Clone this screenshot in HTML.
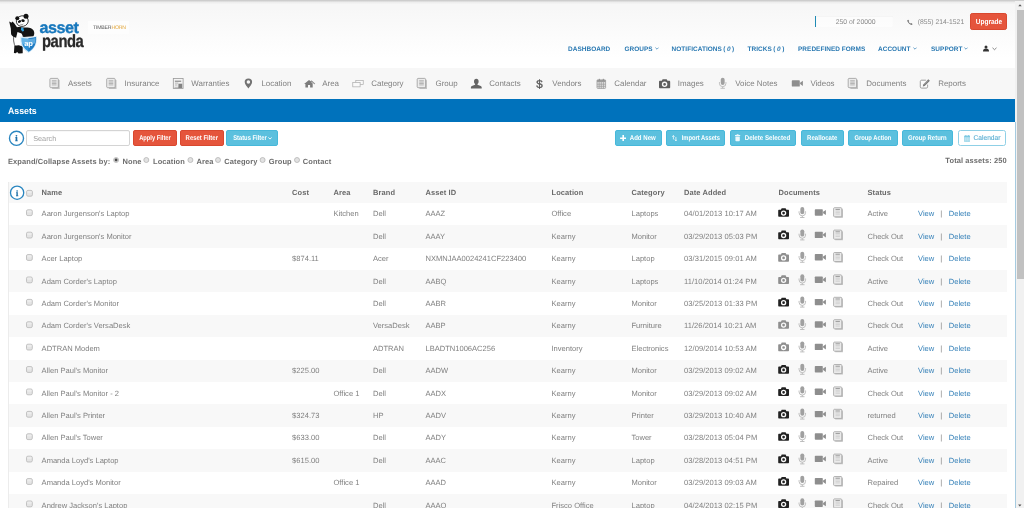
<!DOCTYPE html><html><head><meta charset="utf-8"><title>Assets</title><style>
html,body{margin:0;padding:0;background:#fff;overflow:hidden;}
#clip{position:absolute;left:0;top:0;width:1024px;height:508px;overflow:hidden;background:#fff;}
body{width:1024px;height:508px;overflow:hidden;font-family:"Liberation Sans",Arial,sans-serif;text-rendering:geometricPrecision;}
#page{position:relative;width:1024px;height:508px;overflow:visible;filter:blur(.35px);will-change:transform;}
#page>*{position:absolute;}
.t{white-space:nowrap;font-size:7.47px;color:#7d7d7d;}
.td{color:#808080;font-size:7.55px;}
.th{font-weight:bold;color:#6a6a6a;letter-spacing:.1px;font-size:7.47px;}
.lk{color:#3580b8;font-size:7.55px;}
.ic{display:block;overflow:visible;}
.stripe{left:8.5px;width:998px;background:#f8f8f8;}
.tbl{border-left:1px solid #ececec;border-top:1px solid #eaeaea;box-sizing:border-box;}
.cb{width:5px;height:5px;border:.8px solid #b8b8b8;border-radius:1.5px;background:linear-gradient(#ececec,#dadada);box-sizing:content-box;}
#hdr{left:-6px;top:0;width:1022px;height:68px;background:linear-gradient(#ececec 0,#eeeeee 2.5px,#f7f7f7 4.5px,#f7f7f7 8px,#ffffff 58px);}
#topline{left:-6px;top:-4px;width:1036px;height:6px;background:linear-gradient(#cdcdcd 0,#cdcdcd 4.9px,rgba(236,236,236,0) 6px);}
#nav{left:-6px;top:68px;width:1022px;height:31.5px;background:#f7f7f7;}
#bar{left:-6px;top:99.3px;width:1022px;height:22.5px;background:#0072bc;}
.nv{font-size:7.95px;color:#808080;}
.mn{font-size:6.45px;font-weight:bold;color:#2a79b2;letter-spacing:.05px;}
.btn{box-sizing:border-box;border-radius:1.9px;color:#fff;font-size:6.9px;font-weight:bold;white-space:nowrap;display:flex;align-items:center;justify-content:center;line-height:10px;padding-top:2px;}
.btn svg{display:block;flex:none;margin-top:-2px;}
.bl{display:block;transform-origin:50% 50%;}
.red{background:#e5553c;border:.5px solid #d9482f;}
.cy{background:#5bc0de;border:.5px solid #46b8da;}
.rb{font-size:7.47px;font-weight:bold;color:#6e6e6e;letter-spacing:.1px;}

</style></head><body>
<div id="clip"><div id="page">
<div id="hdr"></div><div id="topline"></div><div id="nav"></div><div id="bar"></div>
<svg class="ic" style="left:0;top:0" width="45" height="60" viewBox="0 0 45 60">
<path d="M15 30.500c-1.700 4-2 9.500-.6 14l2 4 5.800-1 1-12.500-2-6z" fill="#fff" stroke="#222" stroke-width=".7"/>
<path d="M9.200 21.500l2.300 1.300.9-1.200 1.600 1.400 3 4.300c1.500-.4 3.400-.4 5 .2l3.500.1c3-.6 6.600.3 8.100 2.800 1 1.800.9 4.200-.2 5.900l-9.900.7-2-3.500-4-1.600-1.400 5.800c-2.200-.2-4.200-1.500-5-3.400l-.3-5.800z" fill="#141414"/>
<ellipse cx="22.300" cy="21.100" rx="6" ry="5.300" fill="#fff" stroke="#1a1a1a" stroke-width=".8" transform="rotate(-12 22.300 21.100)"/>
<circle cx="17.300" cy="18.300" r="2" fill="#111"/><circle cx="26" cy="16.200" r="2.500" fill="#111"/>
<ellipse cx="19.500" cy="21.500" rx="1.700" ry="1.250" fill="#111" transform="rotate(-30 19.500 21.500)"/><ellipse cx="23" cy="20.600" rx="1.800" ry="1.350" fill="#111" transform="rotate(15 23 20.600)"/>
<path d="M20.400 24.300c.8.600 2.100.600 2.900-.2" stroke="#222" stroke-width=".5" fill="none"/>
<path d="M21.300 27.400l2 .3.700 3.400-1.800.5-1.300-2.100z" fill="#2fa3e0"/>
<path d="M14.400 45.800l4.400-.6 3.900 1.200v6.800l-4.100.3-1.500-1.500-1.300 1.300-1.900-.3z" fill="#141414"/>
<path d="M21 37.100c5 1.400 10.200 1.400 15.200-.3.600 7.200-2.300 12.400-7.800 15.400-5.400-3-8-8.200-7.400-15.100z" fill="#2f93d6" stroke="#d3e9f7" stroke-width="1.200"/>
<path d="M28.400 38.200c2.700 0 5.300-.4 7.600-1.100.6 7-2.100 11.900-7.600 14.900z" fill="#1f7cc4"/>
<path d="M21.700 38.100c4.500 1.100 9.400 1.100 13.800-.2.100 2.100-.1 3.900-.7 5.600-4 1.500-8.500 1.500-12.500.2-.5-1.700-.7-3.600-.6-5.600z" fill="#8fd0f5" opacity=".55"/>
<text x="28.500" y="46.200" font-family="Liberation Sans,Arial,sans-serif" font-weight="bold" font-size="7.600" fill="#fff" text-anchor="middle" letter-spacing="-.3">ap</text>
</svg>
<div class="t" style="left:39.6px;top:19px;height:18px;line-height:18px;font-size:16.2px;font-weight:bold;color:#1878bd;letter-spacing:-.5px;-webkit-text-stroke:.35px #1878bd">asset</div>
<div class="t" style="left:41.8px;top:30.5px;height:20px;line-height:20px;font-size:17.6px;font-weight:bold;color:#2a2a2a;letter-spacing:-.5px;transform:scaleX(.84);transform-origin:0 0;-webkit-text-stroke:.3px #2a2a2a">panda</div>
<div style="left:88px;top:21px;width:41px;height:13px;background:#fdfdfd"></div>
<div class="t" style="left:93px;top:23px;height:10px;line-height:10px;font-size:5.2px;color:#555;letter-spacing:-.2px">TIMBER<span style="color:#e2a63a">HORN</span></div>
<div style="left:814.9px;top:16.4px;width:78px;height:11.1px;background:rgba(255,255,255,.5);border-left:1.7px solid #1f8bb5;box-sizing:border-box;box-shadow:inset 0 .5px 1px rgba(0,0,0,.06)"></div>
<div class="t " style="left:835.7px;top:17px;height:12px;line-height:12px;font-size:6.85px;color:#8a8a8a">250 of 20000</div>
<svg class="ic" style="left:907px;top:19px" width="7" height="8"><svg x="0.000" y="0.400" width="5.8" height="5.8" viewBox="0 0 6 6" overflow="visible"><path d="M1.300.300l1 1.300-.6.900c.4.800 1 1.400 1.800 1.800l.9-.6 1.300 1-.5 1C3.500 6 0 2.500.300.800z" fill="#777"/></svg></svg>
<div class="t " style="left:917.7px;top:17px;height:12px;line-height:12px;font-size:6.8px;color:#8a8a8a">(855) 214-1521</div>
<div class="t mn" style="left:568px;top:44px;height:12px;line-height:12px;">DASHBOARD</div>
<div class="t mn" style="left:624.5px;top:44px;height:12px;line-height:12px;">GROUPS<svg width="4" height="3" viewBox="0 0 4 3" style="display:inline-block;vertical-align:middle;margin-left:2px;margin-top:-1px"><path d="M.4.600L2 2.200 3.600.600" fill="none" stroke="#2a79b2" stroke-width=".7"/></svg></div>
<div class="t mn" style="left:671.6px;top:44px;height:12px;line-height:12px;word-spacing:-.4px;">NOTIFICATIONS ( <i>0</i> )</div>
<div class="t mn" style="left:747.5px;top:44px;height:12px;line-height:12px;word-spacing:-.3px;">TRICKS ( <i>0</i> )</div>
<div class="t mn" style="left:798px;top:44px;height:12px;line-height:12px;">PREDEFINED FORMS</div>
<div class="t mn" style="left:878px;top:44px;height:12px;line-height:12px;">ACCOUNT<svg width="4" height="3" viewBox="0 0 4 3" style="display:inline-block;vertical-align:middle;margin-left:2px;margin-top:-1px"><path d="M.4.600L2 2.200 3.600.600" fill="none" stroke="#2a79b2" stroke-width=".7"/></svg></div>
<div class="t mn" style="left:931px;top:44px;height:12px;line-height:12px;">SUPPORT<svg width="4" height="3" viewBox="0 0 4 3" style="display:inline-block;vertical-align:middle;margin-left:2px;margin-top:-1px"><path d="M.4.600L2 2.200 3.600.600" fill="none" stroke="#2a79b2" stroke-width=".7"/></svg></div>
<svg class="ic" style="left:983px;top:45px" width="7" height="8"><svg x="0.000" y="0.500" width="6" height="6" viewBox="0 0 6 6" overflow="visible"><circle cx="3" cy="1.600" r="1.500" fill="#333"/><path d="M0 6c0-2 1-2.900 3-2.900S6 4 6 6z" fill="#333"/></svg></svg>
<svg class="ic" style="left:992px;top:47px" width="6" height="5"><svg x="0.000" y="0.300" width="5" height="3" viewBox="0 0 5 3" overflow="visible"><path d="M.5.500L2.500 2.400 4.500.500" fill="none" stroke="#555" stroke-width=".7"/></svg></svg>
<svg class="ic" style="left:49px;top:78px" width="12" height="12"><svg x="0.500" y="0.000" width="10.5" height="11" viewBox="0 0 10.5 11" overflow="visible"><path d="M2.600 1.800h6.900c.4 0 .7.300.7.700v8.400H2.600z" fill="#c4c4c4"/><path d="M1.200.4h6.800c.4 0 .8.400.8.800v8.500H1.200c-.4 0-.8-.4-.8-.8V1.200c0-.4.400-.8.800-.8z" fill="#ececec" stroke="#9c9c9c" stroke-width=".8"/><path d="M2.400 2.700h4.600M2.400 4.100h4.600M2.400 5.500h4.600M2.400 6.900h4.600" stroke="#9e9e9e" stroke-width=".7"/></svg></svg>
<div class="t nv" style="left:68px;top:78px;height:12px;line-height:12px;">Assets</div>
<svg class="ic" style="left:106px;top:78px" width="12" height="12"><svg x="0.300" y="0.000" width="10.5" height="11" viewBox="0 0 10.5 11" overflow="visible"><path d="M2.600 1.800h6.900c.4 0 .7.300.7.700v8.400H2.600z" fill="#c4c4c4"/><path d="M1.200.4h6.800c.4 0 .8.400.8.800v8.500H1.200c-.4 0-.8-.4-.8-.8V1.200c0-.4.400-.8.800-.8z" fill="#ececec" stroke="#9c9c9c" stroke-width=".8"/><path d="M2.400 2.700h4.600M2.400 4.100h4.600M2.400 5.500h4.600M2.400 6.900h4.600" stroke="#9e9e9e" stroke-width=".7"/></svg></svg>
<div class="t nv" style="left:124.6px;top:78px;height:12px;line-height:12px;">Insurance</div>
<svg class="ic" style="left:172px;top:78px" width="13" height="12"><svg x="0.900" y="0.000" width="10.6" height="10.8" viewBox="0 0 10.600 10.800" overflow="visible"><rect x=".4" y=".4" width="9.800" height="10" fill="#f4f4f4" stroke="#989898" stroke-width=".8"/><path d="M2 3.200h6.300" stroke="#6a6a6a" stroke-width=".9"/><path d="M2 5.100h3.400M2 7h2.600M1.500 9.300h7.500" stroke="#9a9a9a" stroke-width=".7"/><rect x="5.500" y="5.700" width="3.800" height="4.300" fill="#838383"/></svg></svg>
<div class="t nv" style="left:191.3px;top:78px;height:12px;line-height:12px;">Warranties</div>
<svg class="ic" style="left:244px;top:78px" width="10" height="12"><svg x="0.400" y="0.200" width="8" height="10.6" viewBox="0 0 8.600 12" preserveAspectRatio="none" overflow="visible"><path d="M4.300.3a4 4 0 0 0-4 4c0 2.600 2.700 5.300 4 7.400 1.300-2.100 4-4.800 4-7.400a4 4 0 0 0-4-4zm0 2.100a1.900 1.900 0 1 1 0 3.800 1.900 1.900 0 0 1 0-3.800z" fill="#727272" fill-rule="evenodd"/></svg></svg>
<div class="t nv" style="left:261.4px;top:78px;height:12px;line-height:12px;">Location</div>
<svg class="ic" style="left:304px;top:79px" width="13" height="10"><svg x="0.100" y="0.700" width="11.2" height="8" viewBox="0 0 11.200 8" overflow="visible"><path d="M0 4.400L4.900.2l1.700 1.400.9-.9 3.600 3.300-.6.600-3-2.600-.5.400 1.600 1.500v4H6V5.300H3.900v2.600H1.300V4.400z" fill="#7c7c7c"/><path d="M7.500.7l3.600 3.300-.6.600-3.400-3.100z" fill="#a0a0a0"/></svg></svg>
<div class="t nv" style="left:322.2px;top:78px;height:12px;line-height:12px;">Area</div>
<svg class="ic" style="left:352px;top:80px" width="13" height="9"><svg x="0.400" y="0.000" width="11.3" height="7.3" viewBox="0 0 12 8" preserveAspectRatio="none" overflow="visible"><rect x="3.600" y=".4" width="7.900" height="4.600" fill="#f9f9f9" stroke="#aaa" stroke-width=".75"/><rect x=".4" y="2.600" width="7.800" height="4.900" fill="#f9f9f9" stroke="#aaa" stroke-width=".75"/></svg></svg>
<div class="t nv" style="left:371.3px;top:78px;height:12px;line-height:12px;">Category</div>
<svg class="ic" style="left:416px;top:78px" width="13" height="12"><svg x="0.800" y="0.000" width="10.5" height="11" viewBox="0 0 10.5 11" overflow="visible"><path d="M2.600 1.800h6.900c.4 0 .7.300.7.700v8.400H2.600z" fill="#c4c4c4"/><path d="M1.200.4h6.800c.4 0 .8.400.8.800v8.500H1.200c-.4 0-.8-.4-.8-.8V1.200c0-.4.400-.8.800-.8z" fill="#ececec" stroke="#9c9c9c" stroke-width=".8"/><path d="M2.400 2.700h4.600M2.400 4.100h4.600M2.400 5.500h4.600M2.400 6.900h4.600" stroke="#9e9e9e" stroke-width=".7"/></svg></svg>
<div class="t nv" style="left:435.5px;top:78px;height:12px;line-height:12px;">Group</div>
<svg class="ic" style="left:470px;top:78px" width="13" height="12"><svg x="0.800" y="0.600" width="11" height="10.2" viewBox="0 0 11.500 11" preserveAspectRatio="none" overflow="visible"><ellipse cx="5.750" cy="3" rx="2.400" ry="2.900" fill="#646464"/><path d="M4.500 5h2.500v1.600c1.600.6 4.200 1.200 4.400 2.600v1.500H.1V9.200c.2-1.400 2.800-2 4.400-2.600z" fill="#646464"/></svg></svg>
<div class="t nv" style="left:489.3px;top:78px;height:12px;line-height:12px;">Contacts</div>
<div class="t nv" style="left:536.3px;top:78px;height:14px;line-height:14px;font-size:11.6px;color:#555;-webkit-text-stroke:.3px #555;">$</div>
<div class="t nv" style="left:552.3px;top:78px;height:12px;line-height:12px;">Vendors</div>
<svg class="ic" style="left:596px;top:78px" width="12" height="12"><svg x="0.600" y="0.600" width="9.4" height="10.2" viewBox="0 0 9.400 10.200" overflow="visible"><rect x=".4" y="1.300" width="8.600" height="8.500" rx=".7" fill="#e2e2e2" stroke="#9c9c9c" stroke-width=".8"/><rect x=".4" y="1.300" width="8.600" height="2.200" fill="#9c9c9c"/><path d="M.4 5.600h8.600M.4 7.700h8.600M2.550 3.500v6.300M4.700 3.500v6.300M6.850 3.500v6.300" stroke="#9c9c9c" stroke-width=".75"/><path d="M2.700.2v1.900M6.700.2v1.900" stroke="#8c8c8c" stroke-width="1"/></svg></svg>
<div class="t nv" style="left:614.3px;top:78px;height:12px;line-height:12px;">Calendar</div>
<svg class="ic" style="left:659px;top:79px" width="13" height="11"><svg x="0.000" y="0.200" width="11.4" height="9" viewBox="0 0 11 8.700" overflow="visible"><path d="M3.500 0h3.900l.8 1.600h1.600c.6 0 1 .4 1 1v5.100c0 .6-.4 1-1 1H1c-.6 0-1-.4-1-1V2.600c0-.6.4-1 1-1h1.700zM5.400 2.300a2.650 2.650 0 1 0 0 5.300 2.650 2.650 0 0 0 0-5.300zm0 1.300a1.350 1.350 0 1 1 0 2.700 1.350 1.350 0 0 1 0-2.700z" fill-rule="evenodd" fill="#5e5e5e"/></svg></svg>
<div class="t nv" style="left:677.8px;top:78px;height:12px;line-height:12px;">Images</div>
<svg class="ic" style="left:719px;top:77px" width="9" height="13"><svg x="0.000" y="0.800" width="7.4" height="11" viewBox="0 0 7.400 11" overflow="visible"><path d="M.450 4.300v1.300a3.250 3.250 0 0 0 6.500 0V4.300M3.700 8.900v1.500M1.500 10.500h4.400" fill="none" stroke="#b4b4b4" stroke-width=".85"/><rect x="1.750" y="0" width="3.900" height="7.200" rx="1.950" fill="#a0a0a0"/></svg></svg>
<div class="t nv" style="left:735.2px;top:78px;height:12px;line-height:12px;">Voice Notes</div>
<svg class="ic" style="left:791px;top:80px" width="13" height="8"><svg x="0.800" y="0.200" width="11.1" height="6.4" viewBox="0 0 11.100 6.400" overflow="visible"><rect x="0" y="0" width="8" height="6.400" rx=".7" fill="#8e8e8e"/><path d="M8.300 2.500l2.800-1.900v5.200L8.300 3.900z" fill="#8e8e8e"/></svg></svg>
<div class="t nv" style="left:810.4px;top:78px;height:12px;line-height:12px;">Videos</div>
<svg class="ic" style="left:847px;top:78px" width="13" height="12"><svg x="0.800" y="0.000" width="10.5" height="11" viewBox="0 0 10.5 11" overflow="visible"><path d="M2.600 1.800h6.900c.4 0 .7.300.7.700v8.400H2.600z" fill="#c4c4c4"/><path d="M1.200.4h6.800c.4 0 .8.400.8.800v8.500H1.200c-.4 0-.8-.4-.8-.8V1.200c0-.4.400-.8.800-.8z" fill="#ececec" stroke="#9c9c9c" stroke-width=".8"/><path d="M2.400 2.700h4.600M2.400 4.100h4.600M2.400 5.500h4.600M2.400 6.900h4.600" stroke="#9e9e9e" stroke-width=".7"/></svg></svg>
<div class="t nv" style="left:866.3px;top:78px;height:12px;line-height:12px;">Documents</div>
<svg class="ic" style="left:919px;top:79px" width="13" height="11"><svg x="0.900" y="0.000" width="10.4" height="9.5" viewBox="0 0 10.400 9.500" overflow="visible"><path d="M6 1.200H1.700C1 1.200.4 1.700.4 2.500v5.300c0 .8.500 1.300 1.300 1.300h4.700c.8 0 1.300-.5 1.300-1.300V5.600" fill="#fbfbfb" stroke="#888" stroke-width=".8"/><path d="M3.300 5.500L8.400.2l1.600 1.500-5.200 5.200-1.900.5z" fill="#7a7a7a"/><path d="M4 5.600l3.900-3.900" stroke="#d8d8d8" stroke-width=".45"/></svg></svg>
<div class="t nv" style="left:938.2px;top:78px;height:12px;line-height:12px;">Reports</div>
<div class="t " style="left:7.6px;top:104px;height:14px;line-height:14px;font-size:9.4px;font-weight:bold;color:#fff;transform:scaleX(.935);transform-origin:0 50%;">Assets</div>
<svg class="ic" style="left:8px;top:130px" width="18" height="18"><svg x="0.750" y="0.550" width="15.5" height="15.5" viewBox="0 0 15 15" overflow="visible"><circle cx="7.5" cy="7.5" r="6.8" fill="#fff" stroke="#2a86c0" stroke-width="1.35"/><text x="7.5" y="10.6" text-anchor="middle" font-family="'Liberation Serif','DejaVu Serif',serif" font-weight="bold" font-size="8.3" fill="#1d6fa8" stroke="#1d6fa8" stroke-width=".3">i</text></svg></svg>
<div style="left:26.1px;top:130.300px;width:104.4px;height:15.600px;box-sizing:border-box;border:.8px solid #d4d4d4;border-radius:2px;background:#fff;box-shadow:inset 0 .5px .8px rgba(0,0,0,.06)"></div>
<div class="t " style="left:33.2px;top:133px;height:12px;line-height:12px;font-size:7.3px;color:#a2a2a2;">Search</div>
<div class="btn red" style="left:133px;top:130.2px;width:43.8px;height:15.8px;"><span class="bl" style="margin:0 -3.17px;transform:scaleX(0.833);font-size:6.9px;">Apply Filter</span></div>
<div class="btn red" style="left:179.6px;top:130.2px;width:44.1px;height:15.8px;"><span class="bl" style="margin:0 -2.59px;transform:scaleX(0.862);font-size:6.9px;">Reset Filter</span></div>
<div class="btn cy" style="left:226.4px;top:130.2px;width:51.7px;height:15.8px;"><span class="bl" style="margin:0 -3.19px;transform:scaleX(0.84);font-size:6.9px;">Status Filter</span><svg width="4" height="2.800" viewBox="0 0 4 2.800" style="margin-left:1.500px;margin-top:-1.200px"><path d="M.3.400L2 2.100 3.700.400" fill="none" stroke="#fff" stroke-width=".9"/></svg></div>
<div class="btn cy" style="left:614.9px;top:130.2px;width:46.9px;height:15.8px;padding-right:1.6px;"><svg width="6.400" height="6.400" viewBox="0 0 6 6" style="margin-right:3.600px;"><path d="M3 .100v5.800M.100 3h5.800" stroke="#fff" stroke-width="1.500"/></svg><span class="bl" style="margin:0 -1.76px;transform:scaleX(0.881);font-size:6.9px;">Add New</span></div>
<div class="btn cy" style="left:666.3px;top:130.2px;width:58.9px;height:15.8px;"><svg width="5.400" height="6.400" viewBox="0 0 5.400 6.400" style="margin-right:4.200px;"><path d="M1.400 4.400V.700M.300 1.800L1.400.500l1.100 1.300M3.900 2v3.700M2.800 4.600l1.100 1.300L5 4.600" stroke="#fff" stroke-width=".75" fill="none"/></svg><span class="bl" style="margin:0 -3.73px;transform:scaleX(0.837);font-size:6.9px;">Import Assets</span></div>
<div class="btn cy" style="left:729.7px;top:130.2px;width:66.7px;height:15.8px;"><svg width="5.200" height="7.300" viewBox="0 0 5 7" preserveAspectRatio="none" style="margin-right:4.600px;opacity:.88"><path d="M0 1h5v.9H0zM1.600.2h1.800V1H1.600zM.4 2.300h4.200v3.900c0 .4-.3.700-.7.700H1.100c-.4 0-.7-.3-.7-.7z" fill="#fff"/></svg><span class="bl" style="margin:0 -2.75px;transform:scaleX(0.892);font-size:6.9px;">Delete Selected</span></div>
<div class="btn cy" style="left:801.4px;top:130.2px;width:42.3px;height:15.8px;"><span class="bl" style="margin:0 -2.11px;transform:scaleX(0.878);font-size:6.9px;">Reallocate</span></div>
<div class="btn cy" style="left:848.2px;top:130.2px;width:49.4px;height:15.8px;"><span class="bl" style="margin:0 -3.51px;transform:scaleX(0.84);font-size:6.9px;">Group Action</span></div>
<div class="btn cy" style="left:902.3px;top:130.2px;width:51.0px;height:15.8px;"><span class="bl" style="margin:0 -3.07px;transform:scaleX(0.863);font-size:6.9px;">Group Return</span></div>
<div class="btn" style="left:958.100px;top:130.2px;width:47.700px;height:16.0px;background:#fff;border:.9px solid #8fd0e6;border-radius:2.400px;color:#5aaed2;"><svg width="6.400" height="7" viewBox="0 0 6.400 7" style="margin-right:3.600px;"><rect x=".3" y=".9" width="5.800" height="5.800" rx=".5" fill="#d4edf6" stroke="#7fcbe3" stroke-width=".6"/><rect x=".3" y=".9" width="5.800" height="1.500" fill="#7fcbe3"/><path d="M.3 3.900h5.800M.3 5.300h5.800M2.200 2.400v4.300M4.200 2.400v4.300" stroke="#8fd2e7" stroke-width=".45"/><path d="M1.800 0v1.500M4.600 0v1.500" stroke="#6fc3de" stroke-width=".7"/></svg><span class="bl" style="margin:0 -0.55px;transform:scaleX(0.961);font-size:6.9px;font-weight:normal;-webkit-text-stroke:.12px #5aaed2;">Calendar</span></div>
<div class="btn red" style="left:970.2px;top:12.7px;width:37.300px;height:17.500px;border-radius:2.2px;"><span class="bl" style="margin:0 -1.80px;transform:scaleX(0.88);font-size:7.4px;">Upgrade</span></div>
<div class="t rb" style="left:8px;top:156px;height:12px;line-height:12px;">Expand/Collapse Assets by:</div>
<svg class="ic" style="left:113px;top:157px" width="8" height="7"><svg x="0.200" y="0.100" width="5.8" height="5.8" viewBox="0 0 5.8 5.8" overflow="visible"><circle cx="2.900" cy="2.900" r="2.500" fill="#e2e2e2" stroke="#b2b2b2" stroke-width=".75"/><circle cx="2.900" cy="2.900" r="1.450" fill="#4a4a4a"/></svg></svg>
<div class="t rb" style="left:122.5px;top:156px;height:12px;line-height:12px;">None</div>
<svg class="ic" style="left:143px;top:157px" width="8" height="7"><svg x="0.400" y="0.100" width="5.8" height="5.8" viewBox="0 0 5.8 5.8" overflow="visible"><circle cx="2.900" cy="2.900" r="2.500" fill="#e2e2e2" stroke="#b2b2b2" stroke-width=".75"/></svg></svg>
<div class="t rb" style="left:153px;top:156px;height:12px;line-height:12px;">Location</div>
<svg class="ic" style="left:187px;top:157px" width="8" height="7"><svg x="0.500" y="0.100" width="5.8" height="5.8" viewBox="0 0 5.8 5.8" overflow="visible"><circle cx="2.900" cy="2.900" r="2.500" fill="#e2e2e2" stroke="#b2b2b2" stroke-width=".75"/></svg></svg>
<div class="t rb" style="left:196.4px;top:156px;height:12px;line-height:12px;">Area</div>
<svg class="ic" style="left:215px;top:157px" width="7" height="7"><svg x="0.100" y="0.100" width="5.8" height="5.8" viewBox="0 0 5.8 5.8" overflow="visible"><circle cx="2.900" cy="2.900" r="2.500" fill="#e2e2e2" stroke="#b2b2b2" stroke-width=".75"/></svg></svg>
<div class="t rb" style="left:224.3px;top:156px;height:12px;line-height:12px;">Category</div>
<svg class="ic" style="left:259px;top:157px" width="8" height="7"><svg x="0.700" y="0.100" width="5.8" height="5.8" viewBox="0 0 5.8 5.8" overflow="visible"><circle cx="2.900" cy="2.900" r="2.500" fill="#e2e2e2" stroke="#b2b2b2" stroke-width=".75"/></svg></svg>
<div class="t rb" style="left:268.8px;top:156px;height:12px;line-height:12px;">Group</div>
<svg class="ic" style="left:294px;top:157px" width="7" height="7"><svg x="0.100" y="0.100" width="5.8" height="5.8" viewBox="0 0 5.8 5.8" overflow="visible"><circle cx="2.900" cy="2.900" r="2.500" fill="#e2e2e2" stroke="#b2b2b2" stroke-width=".75"/></svg></svg>
<div class="t rb" style="left:302.8px;top:156px;height:12px;line-height:12px;">Contact</div>
<div class="t rb" style="left:0px;top:155px;height:12px;line-height:12px;left:auto;right:17.300px;">Total assets: 250</div>
<div class="tbl" style="left:8px;top:182px;width:999px;height:326px"></div>
<div class="stripe" style="top:182px;height:20.80px"></div>
<div class="stripe" style="top:225.20px;height:22.4px"></div>
<div class="stripe" style="top:270.00px;height:22.4px"></div>
<div class="stripe" style="top:314.80px;height:22.4px"></div>
<div class="stripe" style="top:359.60px;height:22.4px"></div>
<div class="stripe" style="top:404.40px;height:22.4px"></div>
<div class="stripe" style="top:449.20px;height:22.4px"></div>
<div class="stripe" style="top:494.00px;height:22.4px"></div>
<svg class="ic" style="left:9px;top:185px" width="17" height="17"><svg x="0.800" y="0.400" width="14.6" height="14.6" viewBox="0 0 15 15" overflow="visible"><circle cx="7.5" cy="7.5" r="6.8" fill="#fff" stroke="#2a86c0" stroke-width="1.35"/><text x="7.5" y="10.6" text-anchor="middle" font-family="'Liberation Serif','DejaVu Serif',serif" font-weight="bold" font-size="8.3" fill="#1d6fa8" stroke="#1d6fa8" stroke-width=".3">i</text></svg></svg>
<svg class="ic" style="left:26px;top:190px" width="8" height="8"><svg x="0.200" y="0.000" width="6.6" height="6.6" viewBox="0 0 6.6 6.6" overflow="visible"><rect x=".4" y=".4" width="5.800" height="5.800" rx="1.400" fill="#e4e4e4" stroke="#b6b6b6" stroke-width=".8"/><rect x="1" y="1" width="4.600" height="2.200" rx=".8" fill="#efefef" opacity=".7"/></svg></svg>
<div class="t th" style="left:41.6px;top:187px;height:12px;line-height:12px;">Name</div>
<div class="t th" style="left:292.1px;top:187px;height:12px;line-height:12px;">Cost</div>
<div class="t th" style="left:333.5px;top:187px;height:12px;line-height:12px;">Area</div>
<div class="t th" style="left:373px;top:187px;height:12px;line-height:12px;">Brand</div>
<div class="t th" style="left:425.5px;top:187px;height:12px;line-height:12px;">Asset ID</div>
<div class="t th" style="left:551.5px;top:187px;height:12px;line-height:12px;">Location</div>
<div class="t th" style="left:631.5px;top:187px;height:12px;line-height:12px;">Category</div>
<div class="t th" style="left:684px;top:187px;height:12px;line-height:12px;">Date Added</div>
<div class="t th" style="left:778.5px;top:187px;height:12px;line-height:12px;">Documents</div>
<div class="t th" style="left:867.5px;top:187px;height:12px;line-height:12px;">Status</div>
<svg class="ic" style="left:26px;top:209px" width="8" height="9"><svg x="0.100" y="0.400" width="6.6" height="6.6" viewBox="0 0 6.6 6.6" overflow="visible"><rect x=".4" y=".4" width="5.800" height="5.800" rx="1.400" fill="#e4e4e4" stroke="#b6b6b6" stroke-width=".8"/><rect x="1" y="1" width="4.600" height="2.200" rx=".8" fill="#efefef" opacity=".7"/></svg></svg>
<div class="t td" style="left:41.6px;top:208px;height:12px;line-height:12px;">Aaron Jurgenson's Laptop</div>
<div class="t td" style="left:333.5px;top:208px;height:12px;line-height:12px;">Kitchen</div>
<div class="t td" style="left:373px;top:208px;height:12px;line-height:12px;">Dell</div>
<div class="t td" style="left:425.5px;top:208px;height:12px;line-height:12px;">AAAZ</div>
<div class="t td" style="left:551.5px;top:208px;height:12px;line-height:12px;">Office</div>
<div class="t td" style="left:631.5px;top:208px;height:12px;line-height:12px;">Laptops</div>
<div class="t td" style="left:684px;top:208px;height:12px;line-height:12px;letter-spacing:.06px;">04/01/2013 10:17 AM</div>
<svg class="ic" style="left:778px;top:208px" width="13" height="10"><svg x="0.200" y="0.150" width="11" height="8.7" viewBox="0 0 11 8.7" overflow="visible"><path d="M3.500 0h3.900l.8 1.600h1.600c.6 0 1 .4 1 1v5.100c0 .6-.4 1-1 1H1c-.6 0-1-.4-1-1V2.600c0-.6.4-1 1-1h1.700zM5.400 2.300a2.650 2.650 0 1 0 0 5.300 2.650 2.650 0 0 0 0-5.300zm0 1.300a1.350 1.350 0 1 1 0 2.700 1.350 1.350 0 0 1 0-2.700z" fill-rule="evenodd" fill="#222"/></svg></svg>
<svg class="ic" style="left:798px;top:207px" width="10" height="12"><svg x="0.600" y="0.000" width="7.4" height="11" viewBox="0 0 7.4 11" overflow="visible"><path d="M.450 4.300v1.300a3.250 3.250 0 0 0 6.500 0V4.300M3.700 8.900v1.500M1.500 10.500h4.400" fill="none" stroke="#b4b4b4" stroke-width=".85"/><rect x="1.750" y="0" width="3.900" height="7.200" rx="1.950" fill="#a0a0a0"/></svg></svg>
<svg class="ic" style="left:814px;top:209px" width="13" height="8"><svg x="0.800" y="0.300" width="11.1" height="6.4" viewBox="0 0 11.1 6.4" overflow="visible"><rect x="0" y="0" width="8" height="6.400" rx=".7" fill="#8e8e8e"/><path d="M8.300 2.500l2.800-1.900v5.200L8.300 3.900z" fill="#8e8e8e"/></svg></svg>
<svg class="ic" style="left:833px;top:207px" width="12" height="12"><svg x="0.200" y="0.300" width="9.8" height="10.5" viewBox="0 0 9.8 10.5" overflow="visible"><path d="M2 1.600h7c.4 0 .8.400.8.800v8.100H2z" fill="#c6c6c6"/><path d="M1.200.4h6.600c.4 0 .8.400.8.800v8.300H1.200c-.4 0-.8-.4-.8-.8V1.200c0-.4.400-.8.800-.8z" fill="#ebebeb" stroke="#a2a2a2" stroke-width=".8"/><path d="M2.300 2.100h4.400" stroke="#8f8f8f" stroke-width=".9"/><path d="M2.300 3.800h4.400M2.300 5.300h4.400M2.300 6.800h4.400" stroke="#c8c8c8" stroke-width=".7"/></svg></svg>
<div class="t td" style="left:867.5px;top:208px;height:12px;line-height:12px;">Active</div>
<div class="t lk" style="left:918px;top:208px;height:12px;line-height:12px;">View</div>
<div class="t td" style="left:940.3px;top:208px;height:12px;line-height:12px;">|</div>
<div class="t lk" style="left:948.8px;top:208px;height:12px;line-height:12px;">Delete</div>
<svg class="ic" style="left:26px;top:231px" width="8" height="9"><svg x="0.100" y="0.800" width="6.6" height="6.6" viewBox="0 0 6.6 6.6" overflow="visible"><rect x=".4" y=".4" width="5.800" height="5.800" rx="1.400" fill="#e4e4e4" stroke="#b6b6b6" stroke-width=".8"/><rect x="1" y="1" width="4.600" height="2.200" rx=".8" fill="#efefef" opacity=".7"/></svg></svg>
<div class="t td" style="left:41.6px;top:231px;height:12px;line-height:12px;">Aaron Jurgenson's Monitor</div>
<div class="t td" style="left:373px;top:231px;height:12px;line-height:12px;">Dell</div>
<div class="t td" style="left:425.5px;top:231px;height:12px;line-height:12px;">AAAY</div>
<div class="t td" style="left:551.5px;top:231px;height:12px;line-height:12px;">Kearny</div>
<div class="t td" style="left:631.5px;top:231px;height:12px;line-height:12px;">Monitor</div>
<div class="t td" style="left:684px;top:231px;height:12px;line-height:12px;letter-spacing:.06px;">03/29/2013 05:03 PM</div>
<svg class="ic" style="left:778px;top:230px" width="13" height="11"><svg x="0.200" y="0.550" width="11" height="8.7" viewBox="0 0 11 8.7" overflow="visible"><path d="M3.500 0h3.900l.8 1.600h1.600c.6 0 1 .4 1 1v5.100c0 .6-.4 1-1 1H1c-.6 0-1-.4-1-1V2.600c0-.6.4-1 1-1h1.700zM5.400 2.300a2.650 2.650 0 1 0 0 5.300 2.650 2.650 0 0 0 0-5.300zm0 1.300a1.350 1.350 0 1 1 0 2.700 1.350 1.350 0 0 1 0-2.700z" fill-rule="evenodd" fill="#222"/></svg></svg>
<svg class="ic" style="left:798px;top:229px" width="10" height="13"><svg x="0.600" y="0.400" width="7.4" height="11" viewBox="0 0 7.4 11" overflow="visible"><path d="M.450 4.300v1.300a3.250 3.250 0 0 0 6.500 0V4.300M3.700 8.900v1.500M1.500 10.500h4.400" fill="none" stroke="#b4b4b4" stroke-width=".85"/><rect x="1.750" y="0" width="3.900" height="7.200" rx="1.950" fill="#a0a0a0"/></svg></svg>
<svg class="ic" style="left:814px;top:231px" width="13" height="9"><svg x="0.800" y="0.700" width="11.1" height="6.4" viewBox="0 0 11.1 6.4" overflow="visible"><rect x="0" y="0" width="8" height="6.400" rx=".7" fill="#8e8e8e"/><path d="M8.300 2.500l2.800-1.900v5.200L8.300 3.900z" fill="#8e8e8e"/></svg></svg>
<svg class="ic" style="left:833px;top:229px" width="12" height="13"><svg x="0.200" y="0.700" width="9.8" height="10.5" viewBox="0 0 9.8 10.5" overflow="visible"><path d="M2 1.600h7c.4 0 .8.400.8.800v8.100H2z" fill="#c6c6c6"/><path d="M1.200.4h6.600c.4 0 .8.400.8.800v8.300H1.200c-.4 0-.8-.4-.8-.8V1.200c0-.4.400-.8.800-.8z" fill="#ebebeb" stroke="#a2a2a2" stroke-width=".8"/><path d="M2.300 2.100h4.400" stroke="#8f8f8f" stroke-width=".9"/><path d="M2.300 3.800h4.400M2.300 5.300h4.400M2.300 6.800h4.400" stroke="#c8c8c8" stroke-width=".7"/></svg></svg>
<div class="t td" style="left:867.5px;top:231px;height:12px;line-height:12px;">Check Out</div>
<div class="t lk" style="left:918px;top:231px;height:12px;line-height:12px;">View</div>
<div class="t td" style="left:940.3px;top:231px;height:12px;line-height:12px;">|</div>
<div class="t lk" style="left:948.8px;top:231px;height:12px;line-height:12px;">Delete</div>
<svg class="ic" style="left:26px;top:254px" width="8" height="8"><svg x="0.100" y="0.200" width="6.6" height="6.6" viewBox="0 0 6.6 6.6" overflow="visible"><rect x=".4" y=".4" width="5.800" height="5.800" rx="1.400" fill="#e4e4e4" stroke="#b6b6b6" stroke-width=".8"/><rect x="1" y="1" width="4.600" height="2.200" rx=".8" fill="#efefef" opacity=".7"/></svg></svg>
<div class="t td" style="left:41.6px;top:253px;height:12px;line-height:12px;">Acer Laptop</div>
<div class="t td" style="left:292.1px;top:253px;height:12px;line-height:12px;">$874.11</div>
<div class="t td" style="left:373px;top:253px;height:12px;line-height:12px;">Acer</div>
<div class="t td" style="left:425.5px;top:253px;height:12px;line-height:12px;">NXMNJAA0024241CF223400</div>
<div class="t td" style="left:551.5px;top:253px;height:12px;line-height:12px;">Kearny</div>
<div class="t td" style="left:631.5px;top:253px;height:12px;line-height:12px;">Laptop</div>
<div class="t td" style="left:684px;top:253px;height:12px;line-height:12px;letter-spacing:.06px;">03/31/2015 09:01 AM</div>
<svg class="ic" style="left:778px;top:252px" width="13" height="11"><svg x="0.200" y="0.950" width="11" height="8.7" viewBox="0 0 11 8.7" overflow="visible"><path d="M3.500 0h3.900l.8 1.600h1.600c.6 0 1 .4 1 1v5.100c0 .6-.4 1-1 1H1c-.6 0-1-.4-1-1V2.600c0-.6.4-1 1-1h1.700zM5.400 2.300a2.650 2.650 0 1 0 0 5.300 2.650 2.650 0 0 0 0-5.300zm0 1.300a1.350 1.350 0 1 1 0 2.700 1.350 1.350 0 0 1 0-2.700z" fill-rule="evenodd" fill="#8f8f8f"/></svg></svg>
<svg class="ic" style="left:798px;top:251px" width="10" height="13"><svg x="0.600" y="0.800" width="7.4" height="11" viewBox="0 0 7.4 11" overflow="visible"><path d="M.450 4.300v1.300a3.250 3.250 0 0 0 6.500 0V4.300M3.700 8.900v1.500M1.500 10.500h4.400" fill="none" stroke="#b4b4b4" stroke-width=".85"/><rect x="1.750" y="0" width="3.900" height="7.200" rx="1.950" fill="#a0a0a0"/></svg></svg>
<svg class="ic" style="left:814px;top:254px" width="13" height="8"><svg x="0.800" y="0.100" width="11.1" height="6.4" viewBox="0 0 11.1 6.4" overflow="visible"><rect x="0" y="0" width="8" height="6.400" rx=".7" fill="#8e8e8e"/><path d="M8.300 2.500l2.800-1.900v5.200L8.300 3.900z" fill="#8e8e8e"/></svg></svg>
<svg class="ic" style="left:833px;top:252px" width="12" height="12"><svg x="0.200" y="0.100" width="9.8" height="10.5" viewBox="0 0 9.8 10.5" overflow="visible"><path d="M2 1.600h7c.4 0 .8.400.8.800v8.100H2z" fill="#c6c6c6"/><path d="M1.200.4h6.600c.4 0 .8.400.8.800v8.300H1.200c-.4 0-.8-.4-.8-.8V1.200c0-.4.400-.8.800-.8z" fill="#ebebeb" stroke="#a2a2a2" stroke-width=".8"/><path d="M2.300 2.100h4.400" stroke="#8f8f8f" stroke-width=".9"/><path d="M2.300 3.800h4.400M2.300 5.300h4.400M2.300 6.800h4.400" stroke="#c8c8c8" stroke-width=".7"/></svg></svg>
<div class="t td" style="left:867.5px;top:253px;height:12px;line-height:12px;">Check Out</div>
<div class="t lk" style="left:918px;top:253px;height:12px;line-height:12px;">View</div>
<div class="t td" style="left:940.3px;top:253px;height:12px;line-height:12px;">|</div>
<div class="t lk" style="left:948.8px;top:253px;height:12px;line-height:12px;">Delete</div>
<svg class="ic" style="left:26px;top:276px" width="8" height="9"><svg x="0.100" y="0.600" width="6.6" height="6.6" viewBox="0 0 6.6 6.6" overflow="visible"><rect x=".4" y=".4" width="5.800" height="5.800" rx="1.400" fill="#e4e4e4" stroke="#b6b6b6" stroke-width=".8"/><rect x="1" y="1" width="4.600" height="2.200" rx=".8" fill="#efefef" opacity=".7"/></svg></svg>
<div class="t td" style="left:41.6px;top:276px;height:12px;line-height:12px;">Adam Corder's Laptop</div>
<div class="t td" style="left:373px;top:276px;height:12px;line-height:12px;">Dell</div>
<div class="t td" style="left:425.5px;top:276px;height:12px;line-height:12px;">AABQ</div>
<div class="t td" style="left:551.5px;top:276px;height:12px;line-height:12px;">Kearny</div>
<div class="t td" style="left:631.5px;top:276px;height:12px;line-height:12px;">Laptops</div>
<div class="t td" style="left:684px;top:276px;height:12px;line-height:12px;letter-spacing:.06px;">11/10/2014 01:24 PM</div>
<svg class="ic" style="left:778px;top:275px" width="13" height="11"><svg x="0.200" y="0.350" width="11" height="8.7" viewBox="0 0 11 8.7" overflow="visible"><path d="M3.500 0h3.900l.8 1.600h1.600c.6 0 1 .4 1 1v5.100c0 .6-.4 1-1 1H1c-.6 0-1-.4-1-1V2.600c0-.6.4-1 1-1h1.700zM5.400 2.300a2.650 2.650 0 1 0 0 5.300 2.650 2.650 0 0 0 0-5.300zm0 1.300a1.350 1.350 0 1 1 0 2.700 1.350 1.350 0 0 1 0-2.700z" fill-rule="evenodd" fill="#8f8f8f"/></svg></svg>
<svg class="ic" style="left:798px;top:274px" width="10" height="13"><svg x="0.600" y="0.200" width="7.4" height="11" viewBox="0 0 7.4 11" overflow="visible"><path d="M.450 4.300v1.300a3.250 3.250 0 0 0 6.500 0V4.300M3.700 8.900v1.500M1.500 10.500h4.400" fill="none" stroke="#b4b4b4" stroke-width=".85"/><rect x="1.750" y="0" width="3.900" height="7.200" rx="1.950" fill="#a0a0a0"/></svg></svg>
<svg class="ic" style="left:814px;top:276px" width="13" height="8"><svg x="0.800" y="0.500" width="11.1" height="6.4" viewBox="0 0 11.1 6.4" overflow="visible"><rect x="0" y="0" width="8" height="6.400" rx=".7" fill="#8e8e8e"/><path d="M8.300 2.500l2.800-1.900v5.200L8.300 3.900z" fill="#8e8e8e"/></svg></svg>
<svg class="ic" style="left:833px;top:274px" width="12" height="12"><svg x="0.200" y="0.500" width="9.8" height="10.5" viewBox="0 0 9.8 10.5" overflow="visible"><path d="M2 1.600h7c.4 0 .8.400.8.800v8.100H2z" fill="#c6c6c6"/><path d="M1.200.4h6.600c.4 0 .8.400.8.800v8.300H1.200c-.4 0-.8-.4-.8-.8V1.200c0-.4.400-.8.800-.8z" fill="#ebebeb" stroke="#a2a2a2" stroke-width=".8"/><path d="M2.300 2.100h4.400" stroke="#8f8f8f" stroke-width=".9"/><path d="M2.300 3.800h4.400M2.300 5.300h4.400M2.300 6.800h4.400" stroke="#c8c8c8" stroke-width=".7"/></svg></svg>
<div class="t td" style="left:867.5px;top:276px;height:12px;line-height:12px;">Active</div>
<div class="t lk" style="left:918px;top:276px;height:12px;line-height:12px;">View</div>
<div class="t td" style="left:940.3px;top:276px;height:12px;line-height:12px;">|</div>
<div class="t lk" style="left:948.8px;top:276px;height:12px;line-height:12px;">Delete</div>
<svg class="ic" style="left:26px;top:299px" width="8" height="8"><svg x="0.100" y="0.000" width="6.6" height="6.6" viewBox="0 0 6.6 6.6" overflow="visible"><rect x=".4" y=".4" width="5.800" height="5.800" rx="1.400" fill="#e4e4e4" stroke="#b6b6b6" stroke-width=".8"/><rect x="1" y="1" width="4.600" height="2.200" rx=".8" fill="#efefef" opacity=".7"/></svg></svg>
<div class="t td" style="left:41.6px;top:298px;height:12px;line-height:12px;">Adam Corder's Monitor</div>
<div class="t td" style="left:373px;top:298px;height:12px;line-height:12px;">Dell</div>
<div class="t td" style="left:425.5px;top:298px;height:12px;line-height:12px;">AABR</div>
<div class="t td" style="left:551.5px;top:298px;height:12px;line-height:12px;">Kearny</div>
<div class="t td" style="left:631.5px;top:298px;height:12px;line-height:12px;">Monitor</div>
<div class="t td" style="left:684px;top:298px;height:12px;line-height:12px;letter-spacing:.06px;">03/25/2013 01:33 PM</div>
<svg class="ic" style="left:778px;top:297px" width="13" height="11"><svg x="0.200" y="0.750" width="11" height="8.7" viewBox="0 0 11 8.7" overflow="visible"><path d="M3.500 0h3.900l.8 1.600h1.600c.6 0 1 .4 1 1v5.100c0 .6-.4 1-1 1H1c-.6 0-1-.4-1-1V2.600c0-.6.4-1 1-1h1.700zM5.400 2.300a2.650 2.650 0 1 0 0 5.300 2.650 2.650 0 0 0 0-5.300zm0 1.300a1.350 1.350 0 1 1 0 2.700 1.350 1.350 0 0 1 0-2.700z" fill-rule="evenodd" fill="#222"/></svg></svg>
<svg class="ic" style="left:798px;top:296px" width="10" height="13"><svg x="0.600" y="0.600" width="7.4" height="11" viewBox="0 0 7.4 11" overflow="visible"><path d="M.450 4.300v1.300a3.250 3.250 0 0 0 6.500 0V4.300M3.700 8.900v1.500M1.500 10.500h4.400" fill="none" stroke="#b4b4b4" stroke-width=".85"/><rect x="1.750" y="0" width="3.900" height="7.200" rx="1.950" fill="#a0a0a0"/></svg></svg>
<svg class="ic" style="left:814px;top:298px" width="13" height="9"><svg x="0.800" y="0.900" width="11.1" height="6.4" viewBox="0 0 11.1 6.4" overflow="visible"><rect x="0" y="0" width="8" height="6.400" rx=".7" fill="#8e8e8e"/><path d="M8.300 2.500l2.800-1.900v5.200L8.300 3.900z" fill="#8e8e8e"/></svg></svg>
<svg class="ic" style="left:833px;top:296px" width="12" height="13"><svg x="0.200" y="0.900" width="9.8" height="10.5" viewBox="0 0 9.8 10.5" overflow="visible"><path d="M2 1.600h7c.4 0 .8.400.8.800v8.100H2z" fill="#c6c6c6"/><path d="M1.200.4h6.600c.4 0 .8.400.8.800v8.300H1.200c-.4 0-.8-.4-.8-.8V1.200c0-.4.400-.8.800-.8z" fill="#ebebeb" stroke="#a2a2a2" stroke-width=".8"/><path d="M2.300 2.100h4.400" stroke="#8f8f8f" stroke-width=".9"/><path d="M2.300 3.800h4.400M2.300 5.300h4.400M2.300 6.800h4.400" stroke="#c8c8c8" stroke-width=".7"/></svg></svg>
<div class="t td" style="left:867.5px;top:298px;height:12px;line-height:12px;">Check Out</div>
<div class="t lk" style="left:918px;top:298px;height:12px;line-height:12px;">View</div>
<div class="t td" style="left:940.3px;top:298px;height:12px;line-height:12px;">|</div>
<div class="t lk" style="left:948.8px;top:298px;height:12px;line-height:12px;">Delete</div>
<svg class="ic" style="left:26px;top:321px" width="8" height="8"><svg x="0.100" y="0.400" width="6.6" height="6.6" viewBox="0 0 6.6 6.6" overflow="visible"><rect x=".4" y=".4" width="5.800" height="5.800" rx="1.400" fill="#e4e4e4" stroke="#b6b6b6" stroke-width=".8"/><rect x="1" y="1" width="4.600" height="2.200" rx=".8" fill="#efefef" opacity=".7"/></svg></svg>
<div class="t td" style="left:41.6px;top:320px;height:12px;line-height:12px;">Adam Corder's VersaDesk</div>
<div class="t td" style="left:373px;top:320px;height:12px;line-height:12px;">VersaDesk</div>
<div class="t td" style="left:425.5px;top:320px;height:12px;line-height:12px;">AABP</div>
<div class="t td" style="left:551.5px;top:320px;height:12px;line-height:12px;">Kearny</div>
<div class="t td" style="left:631.5px;top:320px;height:12px;line-height:12px;">Furniture</div>
<div class="t td" style="left:684px;top:320px;height:12px;line-height:12px;letter-spacing:.06px;">11/26/2014 10:21 AM</div>
<svg class="ic" style="left:778px;top:320px" width="13" height="10"><svg x="0.200" y="0.150" width="11" height="8.7" viewBox="0 0 11 8.7" overflow="visible"><path d="M3.500 0h3.900l.8 1.600h1.600c.6 0 1 .4 1 1v5.100c0 .6-.4 1-1 1H1c-.6 0-1-.4-1-1V2.600c0-.6.4-1 1-1h1.700zM5.400 2.300a2.650 2.650 0 1 0 0 5.300 2.650 2.650 0 0 0 0-5.300zm0 1.300a1.350 1.350 0 1 1 0 2.700 1.350 1.350 0 0 1 0-2.700z" fill-rule="evenodd" fill="#8f8f8f"/></svg></svg>
<svg class="ic" style="left:798px;top:319px" width="10" height="12"><svg x="0.600" y="0.000" width="7.4" height="11" viewBox="0 0 7.4 11" overflow="visible"><path d="M.450 4.300v1.300a3.250 3.250 0 0 0 6.500 0V4.300M3.700 8.900v1.500M1.500 10.500h4.400" fill="none" stroke="#b4b4b4" stroke-width=".85"/><rect x="1.750" y="0" width="3.900" height="7.200" rx="1.950" fill="#a0a0a0"/></svg></svg>
<svg class="ic" style="left:814px;top:321px" width="13" height="8"><svg x="0.800" y="0.300" width="11.1" height="6.4" viewBox="0 0 11.1 6.4" overflow="visible"><rect x="0" y="0" width="8" height="6.400" rx=".7" fill="#8e8e8e"/><path d="M8.300 2.500l2.800-1.900v5.200L8.300 3.900z" fill="#8e8e8e"/></svg></svg>
<svg class="ic" style="left:833px;top:319px" width="12" height="12"><svg x="0.200" y="0.300" width="9.8" height="10.5" viewBox="0 0 9.8 10.5" overflow="visible"><path d="M2 1.600h7c.4 0 .8.400.8.800v8.100H2z" fill="#c6c6c6"/><path d="M1.200.4h6.600c.4 0 .8.400.8.800v8.300H1.200c-.4 0-.8-.4-.8-.8V1.200c0-.4.400-.8.800-.8z" fill="#ebebeb" stroke="#a2a2a2" stroke-width=".8"/><path d="M2.300 2.100h4.400" stroke="#8f8f8f" stroke-width=".9"/><path d="M2.300 3.800h4.400M2.300 5.300h4.400M2.300 6.800h4.400" stroke="#c8c8c8" stroke-width=".7"/></svg></svg>
<div class="t td" style="left:867.5px;top:320px;height:12px;line-height:12px;">Check Out</div>
<div class="t lk" style="left:918px;top:320px;height:12px;line-height:12px;">View</div>
<div class="t td" style="left:940.3px;top:320px;height:12px;line-height:12px;">|</div>
<div class="t lk" style="left:948.8px;top:320px;height:12px;line-height:12px;">Delete</div>
<svg class="ic" style="left:26px;top:343px" width="8" height="9"><svg x="0.100" y="0.800" width="6.6" height="6.6" viewBox="0 0 6.6 6.6" overflow="visible"><rect x=".4" y=".4" width="5.800" height="5.800" rx="1.400" fill="#e4e4e4" stroke="#b6b6b6" stroke-width=".8"/><rect x="1" y="1" width="4.600" height="2.200" rx=".8" fill="#efefef" opacity=".7"/></svg></svg>
<div class="t td" style="left:41.6px;top:343px;height:12px;line-height:12px;">ADTRAN Modem</div>
<div class="t td" style="left:373px;top:343px;height:12px;line-height:12px;">ADTRAN</div>
<div class="t td" style="left:425.5px;top:343px;height:12px;line-height:12px;">LBADTN1006AC256</div>
<div class="t td" style="left:551.5px;top:343px;height:12px;line-height:12px;">Inventory</div>
<div class="t td" style="left:631.5px;top:343px;height:12px;line-height:12px;">Electronics</div>
<div class="t td" style="left:684px;top:343px;height:12px;line-height:12px;letter-spacing:.06px;">12/09/2014 10:53 AM</div>
<svg class="ic" style="left:778px;top:342px" width="13" height="11"><svg x="0.200" y="0.550" width="11" height="8.7" viewBox="0 0 11 8.7" overflow="visible"><path d="M3.500 0h3.900l.8 1.600h1.600c.6 0 1 .4 1 1v5.100c0 .6-.4 1-1 1H1c-.6 0-1-.4-1-1V2.600c0-.6.4-1 1-1h1.700zM5.400 2.300a2.650 2.650 0 1 0 0 5.300 2.650 2.650 0 0 0 0-5.300zm0 1.300a1.350 1.350 0 1 1 0 2.700 1.350 1.350 0 0 1 0-2.700z" fill-rule="evenodd" fill="#8f8f8f"/></svg></svg>
<svg class="ic" style="left:798px;top:341px" width="10" height="13"><svg x="0.600" y="0.400" width="7.4" height="11" viewBox="0 0 7.4 11" overflow="visible"><path d="M.450 4.300v1.300a3.250 3.250 0 0 0 6.500 0V4.300M3.700 8.900v1.500M1.500 10.500h4.400" fill="none" stroke="#b4b4b4" stroke-width=".85"/><rect x="1.750" y="0" width="3.900" height="7.200" rx="1.950" fill="#a0a0a0"/></svg></svg>
<svg class="ic" style="left:814px;top:343px" width="13" height="9"><svg x="0.800" y="0.700" width="11.1" height="6.4" viewBox="0 0 11.1 6.4" overflow="visible"><rect x="0" y="0" width="8" height="6.400" rx=".7" fill="#8e8e8e"/><path d="M8.300 2.500l2.800-1.900v5.200L8.300 3.900z" fill="#8e8e8e"/></svg></svg>
<svg class="ic" style="left:833px;top:341px" width="12" height="13"><svg x="0.200" y="0.700" width="9.8" height="10.5" viewBox="0 0 9.8 10.5" overflow="visible"><path d="M2 1.600h7c.4 0 .8.400.8.800v8.100H2z" fill="#c6c6c6"/><path d="M1.200.4h6.600c.4 0 .8.400.8.800v8.300H1.200c-.4 0-.8-.4-.8-.8V1.200c0-.4.400-.8.800-.8z" fill="#ebebeb" stroke="#a2a2a2" stroke-width=".8"/><path d="M2.300 2.100h4.400" stroke="#8f8f8f" stroke-width=".9"/><path d="M2.300 3.800h4.400M2.300 5.300h4.400M2.300 6.800h4.400" stroke="#c8c8c8" stroke-width=".7"/></svg></svg>
<div class="t td" style="left:867.5px;top:343px;height:12px;line-height:12px;">Active</div>
<div class="t lk" style="left:918px;top:343px;height:12px;line-height:12px;">View</div>
<div class="t td" style="left:940.3px;top:343px;height:12px;line-height:12px;">|</div>
<div class="t lk" style="left:948.8px;top:343px;height:12px;line-height:12px;">Delete</div>
<svg class="ic" style="left:26px;top:366px" width="8" height="8"><svg x="0.100" y="0.200" width="6.6" height="6.6" viewBox="0 0 6.6 6.6" overflow="visible"><rect x=".4" y=".4" width="5.800" height="5.800" rx="1.400" fill="#e4e4e4" stroke="#b6b6b6" stroke-width=".8"/><rect x="1" y="1" width="4.600" height="2.200" rx=".8" fill="#efefef" opacity=".7"/></svg></svg>
<div class="t td" style="left:41.6px;top:365px;height:12px;line-height:12px;">Allen Paul's Monitor</div>
<div class="t td" style="left:292.1px;top:365px;height:12px;line-height:12px;">$225.00</div>
<div class="t td" style="left:373px;top:365px;height:12px;line-height:12px;">Dell</div>
<div class="t td" style="left:425.5px;top:365px;height:12px;line-height:12px;">AADW</div>
<div class="t td" style="left:551.5px;top:365px;height:12px;line-height:12px;">Kearny</div>
<div class="t td" style="left:631.5px;top:365px;height:12px;line-height:12px;">Monitor</div>
<div class="t td" style="left:684px;top:365px;height:12px;line-height:12px;letter-spacing:.06px;">03/29/2013 09:02 AM</div>
<svg class="ic" style="left:778px;top:364px" width="13" height="11"><svg x="0.200" y="0.950" width="11" height="8.7" viewBox="0 0 11 8.7" overflow="visible"><path d="M3.500 0h3.900l.8 1.600h1.600c.6 0 1 .4 1 1v5.100c0 .6-.4 1-1 1H1c-.6 0-1-.4-1-1V2.600c0-.6.4-1 1-1h1.700zM5.400 2.300a2.650 2.650 0 1 0 0 5.300 2.650 2.650 0 0 0 0-5.300zm0 1.300a1.350 1.350 0 1 1 0 2.700 1.350 1.350 0 0 1 0-2.700z" fill-rule="evenodd" fill="#222"/></svg></svg>
<svg class="ic" style="left:798px;top:363px" width="10" height="13"><svg x="0.600" y="0.800" width="7.4" height="11" viewBox="0 0 7.4 11" overflow="visible"><path d="M.450 4.300v1.300a3.250 3.250 0 0 0 6.500 0V4.300M3.700 8.900v1.500M1.500 10.500h4.400" fill="none" stroke="#b4b4b4" stroke-width=".85"/><rect x="1.750" y="0" width="3.900" height="7.200" rx="1.950" fill="#a0a0a0"/></svg></svg>
<svg class="ic" style="left:814px;top:366px" width="13" height="8"><svg x="0.800" y="0.100" width="11.1" height="6.4" viewBox="0 0 11.1 6.4" overflow="visible"><rect x="0" y="0" width="8" height="6.400" rx=".7" fill="#8e8e8e"/><path d="M8.300 2.500l2.800-1.900v5.200L8.300 3.900z" fill="#8e8e8e"/></svg></svg>
<svg class="ic" style="left:833px;top:364px" width="12" height="12"><svg x="0.200" y="0.100" width="9.8" height="10.5" viewBox="0 0 9.8 10.5" overflow="visible"><path d="M2 1.600h7c.4 0 .8.400.8.800v8.100H2z" fill="#c6c6c6"/><path d="M1.200.4h6.600c.4 0 .8.400.8.800v8.300H1.200c-.4 0-.8-.4-.8-.8V1.200c0-.4.400-.8.800-.8z" fill="#ebebeb" stroke="#a2a2a2" stroke-width=".8"/><path d="M2.300 2.100h4.400" stroke="#8f8f8f" stroke-width=".9"/><path d="M2.300 3.800h4.400M2.300 5.300h4.400M2.300 6.800h4.400" stroke="#c8c8c8" stroke-width=".7"/></svg></svg>
<div class="t td" style="left:867.5px;top:365px;height:12px;line-height:12px;">Active</div>
<div class="t lk" style="left:918px;top:365px;height:12px;line-height:12px;">View</div>
<div class="t td" style="left:940.3px;top:365px;height:12px;line-height:12px;">|</div>
<div class="t lk" style="left:948.8px;top:365px;height:12px;line-height:12px;">Delete</div>
<svg class="ic" style="left:26px;top:388px" width="8" height="9"><svg x="0.100" y="0.600" width="6.6" height="6.6" viewBox="0 0 6.6 6.6" overflow="visible"><rect x=".4" y=".4" width="5.800" height="5.800" rx="1.400" fill="#e4e4e4" stroke="#b6b6b6" stroke-width=".8"/><rect x="1" y="1" width="4.600" height="2.200" rx=".8" fill="#efefef" opacity=".7"/></svg></svg>
<div class="t td" style="left:41.6px;top:388px;height:12px;line-height:12px;">Allen Paul's Monitor - 2</div>
<div class="t td" style="left:333.5px;top:388px;height:12px;line-height:12px;">Office 1</div>
<div class="t td" style="left:373px;top:388px;height:12px;line-height:12px;">Dell</div>
<div class="t td" style="left:425.5px;top:388px;height:12px;line-height:12px;">AADX</div>
<div class="t td" style="left:551.5px;top:388px;height:12px;line-height:12px;">Kearny</div>
<div class="t td" style="left:631.5px;top:388px;height:12px;line-height:12px;">Monitor</div>
<div class="t td" style="left:684px;top:388px;height:12px;line-height:12px;letter-spacing:.06px;">03/29/2013 09:02 AM</div>
<svg class="ic" style="left:778px;top:387px" width="13" height="11"><svg x="0.200" y="0.350" width="11" height="8.7" viewBox="0 0 11 8.7" overflow="visible"><path d="M3.500 0h3.900l.8 1.600h1.600c.6 0 1 .4 1 1v5.100c0 .6-.4 1-1 1H1c-.6 0-1-.4-1-1V2.600c0-.6.4-1 1-1h1.700zM5.400 2.300a2.650 2.650 0 1 0 0 5.300 2.650 2.650 0 0 0 0-5.300zm0 1.300a1.350 1.350 0 1 1 0 2.700 1.350 1.350 0 0 1 0-2.700z" fill-rule="evenodd" fill="#222"/></svg></svg>
<svg class="ic" style="left:798px;top:386px" width="10" height="13"><svg x="0.600" y="0.200" width="7.4" height="11" viewBox="0 0 7.4 11" overflow="visible"><path d="M.450 4.300v1.300a3.250 3.250 0 0 0 6.500 0V4.300M3.700 8.900v1.500M1.500 10.500h4.400" fill="none" stroke="#b4b4b4" stroke-width=".85"/><rect x="1.750" y="0" width="3.900" height="7.200" rx="1.950" fill="#a0a0a0"/></svg></svg>
<svg class="ic" style="left:814px;top:388px" width="13" height="8"><svg x="0.800" y="0.500" width="11.1" height="6.4" viewBox="0 0 11.1 6.4" overflow="visible"><rect x="0" y="0" width="8" height="6.400" rx=".7" fill="#8e8e8e"/><path d="M8.300 2.500l2.800-1.900v5.200L8.300 3.900z" fill="#8e8e8e"/></svg></svg>
<svg class="ic" style="left:833px;top:386px" width="12" height="12"><svg x="0.200" y="0.500" width="9.8" height="10.5" viewBox="0 0 9.8 10.5" overflow="visible"><path d="M2 1.600h7c.4 0 .8.400.8.800v8.100H2z" fill="#c6c6c6"/><path d="M1.200.4h6.600c.4 0 .8.400.8.800v8.300H1.200c-.4 0-.8-.4-.8-.8V1.200c0-.4.400-.8.800-.8z" fill="#ebebeb" stroke="#a2a2a2" stroke-width=".8"/><path d="M2.300 2.100h4.400" stroke="#8f8f8f" stroke-width=".9"/><path d="M2.300 3.800h4.400M2.300 5.300h4.400M2.300 6.800h4.400" stroke="#c8c8c8" stroke-width=".7"/></svg></svg>
<div class="t td" style="left:867.5px;top:388px;height:12px;line-height:12px;">Check Out</div>
<div class="t lk" style="left:918px;top:388px;height:12px;line-height:12px;">View</div>
<div class="t td" style="left:940.3px;top:388px;height:12px;line-height:12px;">|</div>
<div class="t lk" style="left:948.8px;top:388px;height:12px;line-height:12px;">Delete</div>
<svg class="ic" style="left:26px;top:411px" width="8" height="8"><svg x="0.100" y="0.000" width="6.6" height="6.6" viewBox="0 0 6.6 6.6" overflow="visible"><rect x=".4" y=".4" width="5.800" height="5.800" rx="1.400" fill="#e4e4e4" stroke="#b6b6b6" stroke-width=".8"/><rect x="1" y="1" width="4.600" height="2.200" rx=".8" fill="#efefef" opacity=".7"/></svg></svg>
<div class="t td" style="left:41.6px;top:410px;height:12px;line-height:12px;">Allen Paul's Printer</div>
<div class="t td" style="left:292.1px;top:410px;height:12px;line-height:12px;">$324.73</div>
<div class="t td" style="left:373px;top:410px;height:12px;line-height:12px;">HP</div>
<div class="t td" style="left:425.5px;top:410px;height:12px;line-height:12px;">AADV</div>
<div class="t td" style="left:551.5px;top:410px;height:12px;line-height:12px;">Kearny</div>
<div class="t td" style="left:631.5px;top:410px;height:12px;line-height:12px;">Printer</div>
<div class="t td" style="left:684px;top:410px;height:12px;line-height:12px;letter-spacing:.06px;">03/29/2013 10:40 AM</div>
<svg class="ic" style="left:778px;top:409px" width="13" height="11"><svg x="0.200" y="0.750" width="11" height="8.7" viewBox="0 0 11 8.7" overflow="visible"><path d="M3.500 0h3.900l.8 1.600h1.600c.6 0 1 .4 1 1v5.100c0 .6-.4 1-1 1H1c-.6 0-1-.4-1-1V2.600c0-.6.4-1 1-1h1.700zM5.400 2.300a2.650 2.650 0 1 0 0 5.300 2.650 2.650 0 0 0 0-5.300zm0 1.300a1.350 1.350 0 1 1 0 2.700 1.350 1.350 0 0 1 0-2.700z" fill-rule="evenodd" fill="#222"/></svg></svg>
<svg class="ic" style="left:798px;top:408px" width="10" height="13"><svg x="0.600" y="0.600" width="7.4" height="11" viewBox="0 0 7.4 11" overflow="visible"><path d="M.450 4.300v1.300a3.250 3.250 0 0 0 6.500 0V4.300M3.700 8.900v1.500M1.500 10.500h4.400" fill="none" stroke="#b4b4b4" stroke-width=".85"/><rect x="1.750" y="0" width="3.900" height="7.200" rx="1.950" fill="#a0a0a0"/></svg></svg>
<svg class="ic" style="left:814px;top:410px" width="13" height="9"><svg x="0.800" y="0.900" width="11.1" height="6.4" viewBox="0 0 11.1 6.4" overflow="visible"><rect x="0" y="0" width="8" height="6.400" rx=".7" fill="#8e8e8e"/><path d="M8.300 2.500l2.800-1.900v5.200L8.300 3.900z" fill="#8e8e8e"/></svg></svg>
<svg class="ic" style="left:833px;top:408px" width="12" height="13"><svg x="0.200" y="0.900" width="9.8" height="10.5" viewBox="0 0 9.8 10.5" overflow="visible"><path d="M2 1.600h7c.4 0 .8.400.8.800v8.100H2z" fill="#c6c6c6"/><path d="M1.200.4h6.600c.4 0 .8.400.8.800v8.300H1.200c-.4 0-.8-.4-.8-.8V1.200c0-.4.400-.8.800-.8z" fill="#ebebeb" stroke="#a2a2a2" stroke-width=".8"/><path d="M2.300 2.100h4.400" stroke="#8f8f8f" stroke-width=".9"/><path d="M2.300 3.800h4.400M2.300 5.300h4.400M2.300 6.800h4.400" stroke="#c8c8c8" stroke-width=".7"/></svg></svg>
<div class="t td" style="left:867.5px;top:410px;height:12px;line-height:12px;">returned</div>
<div class="t lk" style="left:918px;top:410px;height:12px;line-height:12px;">View</div>
<div class="t td" style="left:940.3px;top:410px;height:12px;line-height:12px;">|</div>
<div class="t lk" style="left:948.8px;top:410px;height:12px;line-height:12px;">Delete</div>
<svg class="ic" style="left:26px;top:433px" width="8" height="8"><svg x="0.100" y="0.400" width="6.6" height="6.6" viewBox="0 0 6.6 6.6" overflow="visible"><rect x=".4" y=".4" width="5.800" height="5.800" rx="1.400" fill="#e4e4e4" stroke="#b6b6b6" stroke-width=".8"/><rect x="1" y="1" width="4.600" height="2.200" rx=".8" fill="#efefef" opacity=".7"/></svg></svg>
<div class="t td" style="left:41.6px;top:432px;height:12px;line-height:12px;">Allen Paul's Tower</div>
<div class="t td" style="left:292.1px;top:432px;height:12px;line-height:12px;">$633.00</div>
<div class="t td" style="left:373px;top:432px;height:12px;line-height:12px;">Dell</div>
<div class="t td" style="left:425.5px;top:432px;height:12px;line-height:12px;">AADY</div>
<div class="t td" style="left:551.5px;top:432px;height:12px;line-height:12px;">Kearny</div>
<div class="t td" style="left:631.5px;top:432px;height:12px;line-height:12px;">Tower</div>
<div class="t td" style="left:684px;top:432px;height:12px;line-height:12px;letter-spacing:.06px;">03/28/2013 05:04 PM</div>
<svg class="ic" style="left:778px;top:432px" width="13" height="10"><svg x="0.200" y="0.150" width="11" height="8.7" viewBox="0 0 11 8.7" overflow="visible"><path d="M3.500 0h3.900l.8 1.600h1.600c.6 0 1 .4 1 1v5.100c0 .6-.4 1-1 1H1c-.6 0-1-.4-1-1V2.600c0-.6.4-1 1-1h1.700zM5.400 2.300a2.650 2.650 0 1 0 0 5.300 2.650 2.650 0 0 0 0-5.300zm0 1.300a1.350 1.350 0 1 1 0 2.700 1.350 1.350 0 0 1 0-2.700z" fill-rule="evenodd" fill="#222"/></svg></svg>
<svg class="ic" style="left:798px;top:431px" width="10" height="12"><svg x="0.600" y="0.000" width="7.4" height="11" viewBox="0 0 7.4 11" overflow="visible"><path d="M.450 4.300v1.300a3.250 3.250 0 0 0 6.500 0V4.300M3.700 8.900v1.500M1.500 10.500h4.400" fill="none" stroke="#b4b4b4" stroke-width=".85"/><rect x="1.750" y="0" width="3.900" height="7.200" rx="1.950" fill="#a0a0a0"/></svg></svg>
<svg class="ic" style="left:814px;top:433px" width="13" height="8"><svg x="0.800" y="0.300" width="11.1" height="6.4" viewBox="0 0 11.1 6.4" overflow="visible"><rect x="0" y="0" width="8" height="6.400" rx=".7" fill="#8e8e8e"/><path d="M8.300 2.500l2.800-1.900v5.200L8.300 3.900z" fill="#8e8e8e"/></svg></svg>
<svg class="ic" style="left:833px;top:431px" width="12" height="12"><svg x="0.200" y="0.300" width="9.8" height="10.5" viewBox="0 0 9.8 10.5" overflow="visible"><path d="M2 1.600h7c.4 0 .8.400.8.800v8.100H2z" fill="#c6c6c6"/><path d="M1.200.4h6.600c.4 0 .8.400.8.800v8.300H1.200c-.4 0-.8-.4-.8-.8V1.200c0-.4.400-.8.800-.8z" fill="#ebebeb" stroke="#a2a2a2" stroke-width=".8"/><path d="M2.300 2.100h4.400" stroke="#8f8f8f" stroke-width=".9"/><path d="M2.300 3.800h4.400M2.300 5.300h4.400M2.300 6.800h4.400" stroke="#c8c8c8" stroke-width=".7"/></svg></svg>
<div class="t td" style="left:867.5px;top:432px;height:12px;line-height:12px;">Check Out</div>
<div class="t lk" style="left:918px;top:432px;height:12px;line-height:12px;">View</div>
<div class="t td" style="left:940.3px;top:432px;height:12px;line-height:12px;">|</div>
<div class="t lk" style="left:948.8px;top:432px;height:12px;line-height:12px;">Delete</div>
<svg class="ic" style="left:26px;top:455px" width="8" height="9"><svg x="0.100" y="0.800" width="6.6" height="6.6" viewBox="0 0 6.6 6.6" overflow="visible"><rect x=".4" y=".4" width="5.800" height="5.800" rx="1.400" fill="#e4e4e4" stroke="#b6b6b6" stroke-width=".8"/><rect x="1" y="1" width="4.600" height="2.200" rx=".8" fill="#efefef" opacity=".7"/></svg></svg>
<div class="t td" style="left:41.6px;top:455px;height:12px;line-height:12px;">Amanda Loyd's Laptop</div>
<div class="t td" style="left:292.1px;top:455px;height:12px;line-height:12px;">$615.00</div>
<div class="t td" style="left:373px;top:455px;height:12px;line-height:12px;">Dell</div>
<div class="t td" style="left:425.5px;top:455px;height:12px;line-height:12px;">AAAC</div>
<div class="t td" style="left:551.5px;top:455px;height:12px;line-height:12px;">Kearny</div>
<div class="t td" style="left:631.5px;top:455px;height:12px;line-height:12px;">Laptop</div>
<div class="t td" style="left:684px;top:455px;height:12px;line-height:12px;letter-spacing:.06px;">03/28/2013 04:51 PM</div>
<svg class="ic" style="left:778px;top:454px" width="13" height="11"><svg x="0.200" y="0.550" width="11" height="8.7" viewBox="0 0 11 8.7" overflow="visible"><path d="M3.500 0h3.900l.8 1.600h1.600c.6 0 1 .4 1 1v5.100c0 .6-.4 1-1 1H1c-.6 0-1-.4-1-1V2.600c0-.6.4-1 1-1h1.700zM5.400 2.300a2.650 2.650 0 1 0 0 5.300 2.650 2.650 0 0 0 0-5.300zm0 1.300a1.350 1.350 0 1 1 0 2.700 1.350 1.350 0 0 1 0-2.700z" fill-rule="evenodd" fill="#222"/></svg></svg>
<svg class="ic" style="left:798px;top:453px" width="10" height="13"><svg x="0.600" y="0.400" width="7.4" height="11" viewBox="0 0 7.4 11" overflow="visible"><path d="M.450 4.300v1.300a3.250 3.250 0 0 0 6.500 0V4.300M3.700 8.900v1.500M1.500 10.500h4.400" fill="none" stroke="#b4b4b4" stroke-width=".85"/><rect x="1.750" y="0" width="3.900" height="7.200" rx="1.950" fill="#a0a0a0"/></svg></svg>
<svg class="ic" style="left:814px;top:455px" width="13" height="9"><svg x="0.800" y="0.700" width="11.1" height="6.4" viewBox="0 0 11.1 6.4" overflow="visible"><rect x="0" y="0" width="8" height="6.400" rx=".7" fill="#8e8e8e"/><path d="M8.300 2.500l2.800-1.900v5.200L8.300 3.900z" fill="#8e8e8e"/></svg></svg>
<svg class="ic" style="left:833px;top:453px" width="12" height="13"><svg x="0.200" y="0.700" width="9.8" height="10.5" viewBox="0 0 9.8 10.5" overflow="visible"><path d="M2 1.600h7c.4 0 .8.400.8.800v8.100H2z" fill="#c6c6c6"/><path d="M1.200.4h6.600c.4 0 .8.400.8.800v8.300H1.200c-.4 0-.8-.4-.8-.8V1.200c0-.4.400-.8.800-.8z" fill="#ebebeb" stroke="#a2a2a2" stroke-width=".8"/><path d="M2.300 2.100h4.400" stroke="#8f8f8f" stroke-width=".9"/><path d="M2.300 3.800h4.400M2.300 5.300h4.400M2.300 6.800h4.400" stroke="#c8c8c8" stroke-width=".7"/></svg></svg>
<div class="t td" style="left:867.5px;top:455px;height:12px;line-height:12px;">Active</div>
<div class="t lk" style="left:918px;top:455px;height:12px;line-height:12px;">View</div>
<div class="t td" style="left:940.3px;top:455px;height:12px;line-height:12px;">|</div>
<div class="t lk" style="left:948.8px;top:455px;height:12px;line-height:12px;">Delete</div>
<svg class="ic" style="left:26px;top:478px" width="8" height="8"><svg x="0.100" y="0.200" width="6.6" height="6.6" viewBox="0 0 6.6 6.6" overflow="visible"><rect x=".4" y=".4" width="5.800" height="5.800" rx="1.400" fill="#e4e4e4" stroke="#b6b6b6" stroke-width=".8"/><rect x="1" y="1" width="4.600" height="2.200" rx=".8" fill="#efefef" opacity=".7"/></svg></svg>
<div class="t td" style="left:41.6px;top:477px;height:12px;line-height:12px;">Amanda Loyd's Monitor</div>
<div class="t td" style="left:333.5px;top:477px;height:12px;line-height:12px;">Office 1</div>
<div class="t td" style="left:425.5px;top:477px;height:12px;line-height:12px;">AAAD</div>
<div class="t td" style="left:551.5px;top:477px;height:12px;line-height:12px;">Kearny</div>
<div class="t td" style="left:631.5px;top:477px;height:12px;line-height:12px;">Monitor</div>
<div class="t td" style="left:684px;top:477px;height:12px;line-height:12px;letter-spacing:.06px;">03/29/2013 09:03 AM</div>
<svg class="ic" style="left:778px;top:476px" width="13" height="11"><svg x="0.200" y="0.950" width="11" height="8.7" viewBox="0 0 11 8.7" overflow="visible"><path d="M3.500 0h3.900l.8 1.600h1.600c.6 0 1 .4 1 1v5.100c0 .6-.4 1-1 1H1c-.6 0-1-.4-1-1V2.600c0-.6.4-1 1-1h1.700zM5.400 2.300a2.650 2.650 0 1 0 0 5.300 2.650 2.650 0 0 0 0-5.300zm0 1.300a1.350 1.350 0 1 1 0 2.700 1.350 1.350 0 0 1 0-2.700z" fill-rule="evenodd" fill="#222"/></svg></svg>
<svg class="ic" style="left:798px;top:475px" width="10" height="13"><svg x="0.600" y="0.800" width="7.4" height="11" viewBox="0 0 7.4 11" overflow="visible"><path d="M.450 4.300v1.300a3.250 3.250 0 0 0 6.500 0V4.300M3.700 8.900v1.500M1.500 10.500h4.400" fill="none" stroke="#b4b4b4" stroke-width=".85"/><rect x="1.750" y="0" width="3.900" height="7.200" rx="1.950" fill="#a0a0a0"/></svg></svg>
<svg class="ic" style="left:814px;top:478px" width="13" height="8"><svg x="0.800" y="0.100" width="11.1" height="6.4" viewBox="0 0 11.1 6.4" overflow="visible"><rect x="0" y="0" width="8" height="6.400" rx=".7" fill="#8e8e8e"/><path d="M8.300 2.500l2.800-1.900v5.200L8.300 3.900z" fill="#8e8e8e"/></svg></svg>
<svg class="ic" style="left:833px;top:476px" width="12" height="12"><svg x="0.200" y="0.100" width="9.8" height="10.5" viewBox="0 0 9.8 10.5" overflow="visible"><path d="M2 1.600h7c.4 0 .8.400.8.800v8.100H2z" fill="#c6c6c6"/><path d="M1.200.4h6.600c.4 0 .8.400.8.800v8.300H1.200c-.4 0-.8-.4-.8-.8V1.200c0-.4.400-.8.800-.8z" fill="#ebebeb" stroke="#a2a2a2" stroke-width=".8"/><path d="M2.300 2.100h4.400" stroke="#8f8f8f" stroke-width=".9"/><path d="M2.300 3.800h4.400M2.300 5.300h4.400M2.300 6.800h4.400" stroke="#c8c8c8" stroke-width=".7"/></svg></svg>
<div class="t td" style="left:867.5px;top:477px;height:12px;line-height:12px;">Repaired</div>
<div class="t lk" style="left:918px;top:477px;height:12px;line-height:12px;">View</div>
<div class="t td" style="left:940.3px;top:477px;height:12px;line-height:12px;">|</div>
<div class="t lk" style="left:948.8px;top:477px;height:12px;line-height:12px;">Delete</div>
<svg class="ic" style="left:26px;top:500px" width="8" height="9"><svg x="0.100" y="0.600" width="6.6" height="6.6" viewBox="0 0 6.6 6.6" overflow="visible"><rect x=".4" y=".4" width="5.800" height="5.800" rx="1.400" fill="#e4e4e4" stroke="#b6b6b6" stroke-width=".8"/><rect x="1" y="1" width="4.600" height="2.200" rx=".8" fill="#efefef" opacity=".7"/></svg></svg>
<div class="t td" style="left:41.6px;top:500px;height:12px;line-height:12px;">Andrew Jackson's Laptop</div>
<div class="t td" style="left:373px;top:500px;height:12px;line-height:12px;">Dell</div>
<div class="t td" style="left:425.5px;top:500px;height:12px;line-height:12px;">AAAQ</div>
<div class="t td" style="left:551.5px;top:500px;height:12px;line-height:12px;">Frisco Office</div>
<div class="t td" style="left:631.5px;top:500px;height:12px;line-height:12px;">Laptop</div>
<div class="t td" style="left:684px;top:500px;height:12px;line-height:12px;letter-spacing:.06px;">04/24/2013 02:15 PM</div>
<svg class="ic" style="left:778px;top:499px" width="13" height="11"><svg x="0.200" y="0.350" width="11" height="8.7" viewBox="0 0 11 8.7" overflow="visible"><path d="M3.500 0h3.900l.8 1.600h1.600c.6 0 1 .4 1 1v5.100c0 .6-.4 1-1 1H1c-.6 0-1-.4-1-1V2.600c0-.6.4-1 1-1h1.700zM5.400 2.300a2.650 2.650 0 1 0 0 5.300 2.650 2.650 0 0 0 0-5.300zm0 1.300a1.350 1.350 0 1 1 0 2.700 1.350 1.350 0 0 1 0-2.700z" fill-rule="evenodd" fill="#222"/></svg></svg>
<svg class="ic" style="left:798px;top:498px" width="10" height="13"><svg x="0.600" y="0.200" width="7.4" height="11" viewBox="0 0 7.4 11" overflow="visible"><path d="M.450 4.300v1.300a3.250 3.250 0 0 0 6.500 0V4.300M3.700 8.900v1.500M1.500 10.500h4.400" fill="none" stroke="#b4b4b4" stroke-width=".85"/><rect x="1.750" y="0" width="3.900" height="7.200" rx="1.950" fill="#a0a0a0"/></svg></svg>
<svg class="ic" style="left:814px;top:500px" width="13" height="8"><svg x="0.800" y="0.500" width="11.1" height="6.4" viewBox="0 0 11.1 6.4" overflow="visible"><rect x="0" y="0" width="8" height="6.400" rx=".7" fill="#8e8e8e"/><path d="M8.300 2.500l2.800-1.900v5.200L8.300 3.900z" fill="#8e8e8e"/></svg></svg>
<svg class="ic" style="left:833px;top:498px" width="12" height="12"><svg x="0.200" y="0.500" width="9.8" height="10.5" viewBox="0 0 9.8 10.5" overflow="visible"><path d="M2 1.600h7c.4 0 .8.400.8.800v8.100H2z" fill="#c6c6c6"/><path d="M1.200.4h6.600c.4 0 .8.400.8.800v8.300H1.200c-.4 0-.8-.4-.8-.8V1.200c0-.4.400-.8.800-.8z" fill="#ebebeb" stroke="#a2a2a2" stroke-width=".8"/><path d="M2.300 2.100h4.400" stroke="#8f8f8f" stroke-width=".9"/><path d="M2.300 3.800h4.400M2.300 5.300h4.400M2.300 6.800h4.400" stroke="#c8c8c8" stroke-width=".7"/></svg></svg>
<div class="t td" style="left:867.5px;top:500px;height:12px;line-height:12px;">Check Out</div>
<div class="t lk" style="left:918px;top:500px;height:12px;line-height:12px;">View</div>
<div class="t td" style="left:940.3px;top:500px;height:12px;line-height:12px;">|</div>
<div class="t lk" style="left:948.8px;top:500px;height:12px;line-height:12px;">Delete</div>
<div style="left:1015.3px;top:-6px;width:16px;height:520px;background:#f1f1f1"></div>
<div style="left:1014.5px;top:121.8px;width:1.2px;height:392px;background:#a6cbe0"></div>
<div style="left:1017px;top:10px;width:14px;height:268.600px;background:#c1c1c1"></div>
<div style="left:1012px;top:-4px;width:20px;height:5.2px;background:#cdcdcd"></div>
<svg class="ic" style="left:1018px;top:4px" width="5" height="4"><svg x="0.300" y="0.200" width="3.4" height="2.2" viewBox="0 0 5 3" overflow="visible"><path d="M0 3L2.500 0 5 3z" fill="#555"/></svg></svg>
<svg class="ic" style="left:1018px;top:504px" width="5" height="4"><svg x="0.100" y="0.300" width="3.4" height="2.2" viewBox="0 0 5 3" overflow="visible"><path d="M0 0L2.500 3 5 0z" fill="#555"/></svg></svg>
</div></div></body></html>
